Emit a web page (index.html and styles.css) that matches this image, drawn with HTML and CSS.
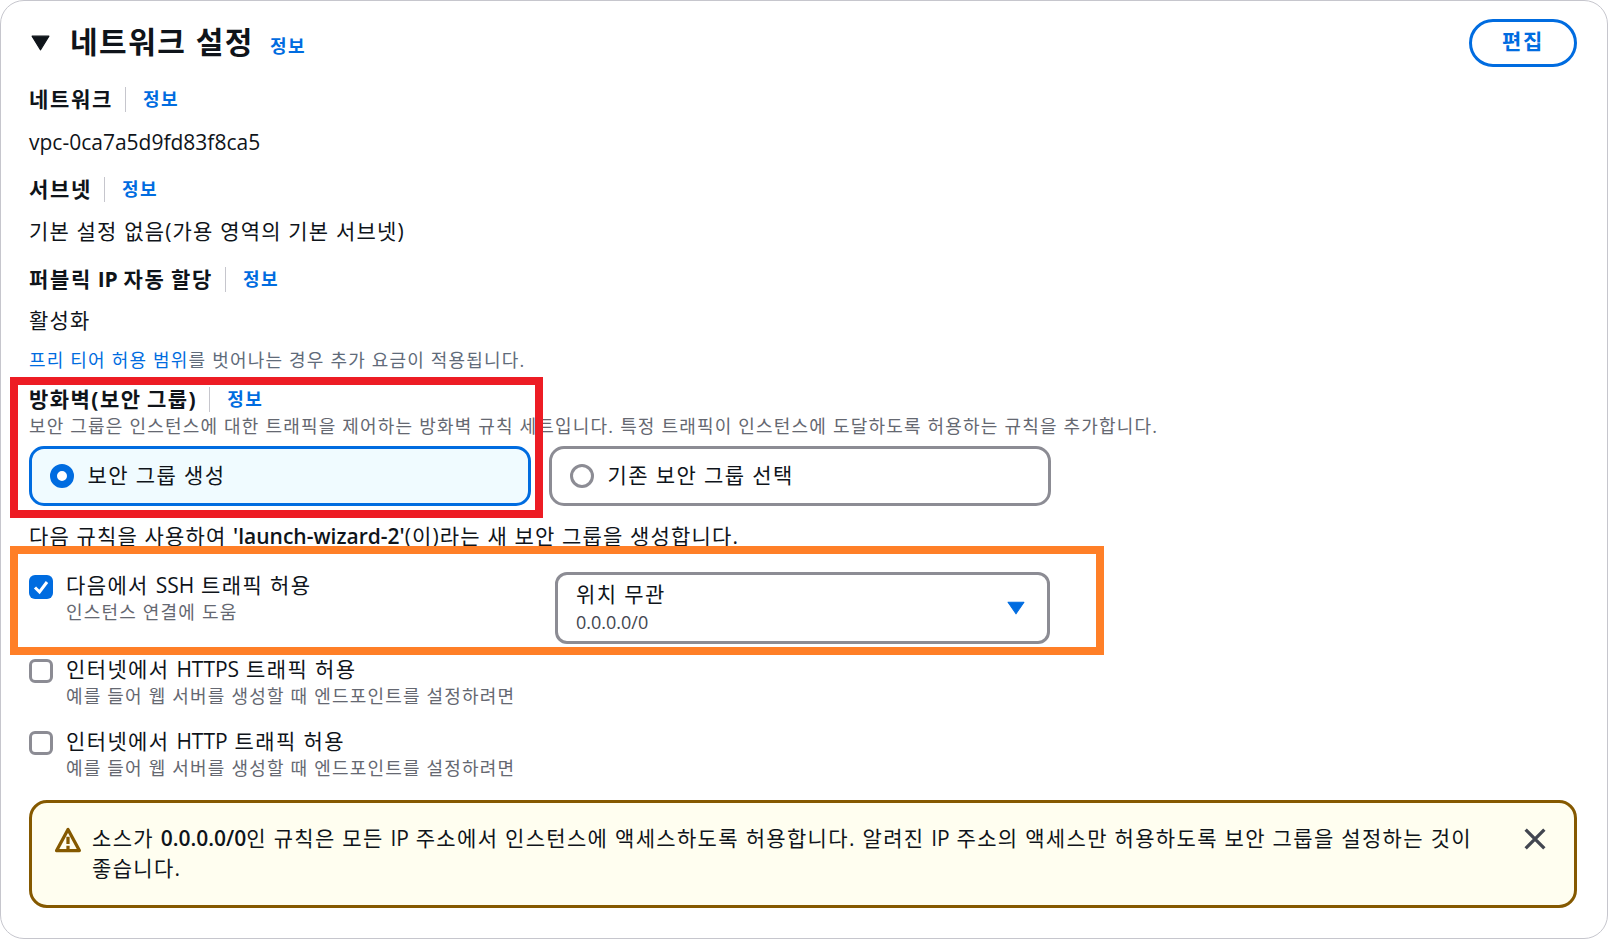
FILE: index.html
```html
<!DOCTYPE html>
<html lang="ko">
<head>
<meta charset="utf-8">
<title>네트워크 설정</title>
<link rel="stylesheet" href="styles.css">
</head>
<body>
<section class="card">
  <header class="head">
    <div class="head-left">
      <svg class="expand" viewBox="0 0 18 15"><path d="M1 1h16L9 14z"/></svg>
      <h2 class="title">네트워크 설정</h2>
      <a class="info info-title">정보</a>
    </div>
    <button class="edit">편집</button>
  </header>

  <div class="label-row first"><span class="label">네트워크</span><a class="info">정보</a></div>
  <p class="value value-first lat">vpc-0ca7a5d9fd83f8ca5</p>
  <div class="label-row"><span class="label">서브넷</span><a class="info">정보</a></div>
  <p class="value">기본 설정 없음(가용 영역의 기본 서브넷)</p>
  <div class="label-row pub"><span class="label">퍼블릭 <span class="lat">IP</span> 자동 할당</span><a class="info">정보</a></div>
  <p class="value value-pub">활성화</p>
  <p class="note"><a class="link">프리 티어 허용 범위</a>를 벗어나는 경우 추가 요금이 적용됩니다.</p>

  <div class="label-row fw"><span class="label label-fw">방화벽(보안 그룹)</span><a class="info">정보</a></div>
  <p class="desc">보안 그룹은 인스턴스에 대한 트래픽을 제어하는 방화벽 규칙 세트입니다. 특정 트래픽이 인스턴스에 도달하도록 허용하는 규칙을 추가합니다.</p>
  <div class="tiles">
    <div class="tile selected"><span class="radio on"></span><span class="tile-text">보안 그룹 생성</span></div>
    <div class="tile"><span class="radio"></span><span class="tile-text">기존 보안 그룹 선택</span></div>
  </div>
  <p class="rule-line">다음 규칙을 사용하여 <b class="lat">'launch-wizard-2'</b>(이)라는 새 보안 그룹을 생성합니다.</p>

  <div class="ssh-row">
    <div class="check-item">
      <span class="box on"><svg viewBox="0 0 24 24"><path d="M6 12.5l4.5 4.5L18 7"/></svg></span>
      <div><div class="check-label">다음에서 <span class="lat">SSH</span> 트래픽 허용</div><div class="check-desc">인스턴스 연결에 도움</div></div>
    </div>
    <div class="select">
      <div><div class="select-main">위치 무관</div><div class="select-sub lat">0.0.0.0/0</div></div>
      <svg class="caret" viewBox="0 0 17 13"><path d="M1 1h15L8.500 12z"/></svg>
    </div>
  </div>

  <div class="check-item https">
    <span class="box"></span>
    <div><div class="check-label">인터넷에서 <span class="lat">HTTPS</span> 트래픽 허용</div><div class="check-desc">예를 들어 웹 서버를 생성할 때 엔드포인트를 설정하려면</div></div>
  </div>
  <div class="check-item http">
    <span class="box"></span>
    <div><div class="check-label">인터넷에서 <span class="lat">HTTP</span> 트래픽 허용</div><div class="check-desc">예를 들어 웹 서버를 생성할 때 엔드포인트를 설정하려면</div></div>
  </div>

  <div class="alert">
    <svg class="alert-icon" viewBox="0 0 16 16"><path d="M8 1.500 1 14.500h14z"/><path d="M8 6v4.500M8 11.500v2"/></svg>
    <p class="alert-text">소스가 <span class="semi lat">0.0.0.0/0</span>인 규칙은 모든 <span class="lat">IP</span> 주소에서 인스턴스에 액세스하도록 허용합니다. 알려진 <span class="lat">IP</span> 주소의 액세스만 허용하도록 보안 그룹을 설정하는 것이<br>좋습니다.</p>
    <svg class="close" viewBox="0 0 20 20"><path d="M1.500 1.500l17 17M18.500 1.500l-17 17"/></svg>
  </div>

  <div class="mark mark-red"></div>
  <div class="mark mark-orange"></div>
</section>
</body>
</html>
```
FILE: styles.css
```css
* { box-sizing: border-box; letter-spacing: .066em; }
html, body { margin: 0; padding: 0; background: #fff; }
body {
  font-family: "Open Sans", "Noto Sans CJK KR", sans-serif;
  font-size: 21px;
  line-height: 30px;
  color: #0f141a;
}
p, h2 { margin: 0; }
.lat { letter-spacing: 0; }
.card {
  position: relative;
  width: 1608px;
  height: 939px;
  border: 1.5px solid #c6c6cd;
  border-radius: 24px;
  padding: 0 30px 0 28px;
}
.head {
  display: flex;
  justify-content: space-between;
  align-items: flex-start;
  padding-top: 18px;
}
.head-left { display: flex; align-items: center; padding-top: 5px; height: 41px; }
.expand { width: 19px; height: 16px; margin: 2px 20px 0 2px; fill: #0f141a; stroke: #0f141a; stroke-width: 1; stroke-linejoin: round; }
.title { font-size: 30px; line-height: 36px; font-weight: 700; letter-spacing: .05em; }
.info { color: #006ce0; font-size: 18px; font-weight: 700; line-height: 24px; letter-spacing: .08em; }
.info-title { margin: 8px 0 0 16px; }
.edit {
  width: 108px;
  height: 48px;
  border: 3px solid #006ce0;
  border-radius: 24px;
  background: #fff;
  color: #006ce0;
  font: 700 21px/30px "Open Sans", "Noto Sans CJK KR", sans-serif;
  letter-spacing: .08em;
  margin-top: 0;
  padding: 0 0 4px;
}
.label-row { display: flex; align-items: center; height: 30px; margin-top: 17px; }
.label-row.first { margin-top: 17px; }
.label-row.pub { margin-top: 18px; }
.label { font-weight: 700; letter-spacing: .08em; word-spacing: -1.5px; padding-right: 12px; border-right: 1.5px solid #c6c6cd; line-height: 25px; }
.label-fw { letter-spacing: .07em; }
.label .lat { letter-spacing: 0; }
.label-row .info { margin-left: 17px; }
.value { margin-top: 12px; letter-spacing: .056em; }
.value.lat { letter-spacing: 0; }
.value-first { margin-top: 13px; }
.value-pub { margin-top: 11px; }
.note { font-size: 18px; line-height: 27px; margin-top: 12px; color: #5f6b7a; }
.link { color: #006ce0; }
.label-row.fw { margin-top: 10px; }
.desc { font-size: 18px; line-height: 27px; color: #656871; margin-top: -1px; }
.tiles { display: grid; grid-template-columns: 502px 502px; gap: 18px; margin-top: 6px; }
.tile {
  height: 60px;
  border: 3px solid #8c8c94;
  border-radius: 15px;
  display: flex;
  align-items: center;
  padding: 0 0 3px 17.5px;
}
.tile.selected { border-color: #006ce0; background: #f0fbff; }
.radio { width: 24px; height: 24px; border-radius: 50%; border: 3px solid #8c8c94; background: #fff; margin-top: 3px; flex: none; }
.radio.on { border: 7px solid #006ce0; }
.tile-text { margin-left: 14px; }
.rule-line { margin-top: 15px; letter-spacing: .055em; }
.rule-line b { font-weight: 600; }
.ssh-row { display: flex; margin-top: 1px; height: 100px; }
.check-item { display: flex; gap: 13px; }
.ssh-row .check-item { width: 526px; padding-top: 18px; }
.box {
  width: 24px;
  height: 24px;
  flex: none;
  margin-top: 5px;
  border: 3px solid #8c8c94;
  border-radius: 6px;
  background: #fff;
}
.box.on { border: 0; background: #006ce0; }
.box svg { display: block; width: 24px; height: 24px; fill: none; stroke: #fff; stroke-width: 3; }
.check-label { line-height: 30px; }
.check-desc { font-size: 18px; line-height: 25px; color: #656871; margin-top: 0; }
.select {
  width: 495px;
  height: 72px;
  margin-top: 20px;
  border: 3px solid #8c8c94;
  border-radius: 12px;
  display: flex;
  justify-content: space-between;
  align-items: center;
  padding: 0 22px 2px 18px;
}
.select-main { line-height: 30px; }
.select-sub { font-size: 18px; line-height: 27px; color: #424650; }
.caret { width: 18px; height: 14px; fill: #006ce0; stroke: #006ce0; stroke-width: 1; stroke-linejoin: round; margin: 2px 0 0 0; }
.https { margin-top: 2px; }
.http { margin-top: 17px; }
.alert {
  position: relative;
  display: flex;
  width: 1548px;
  height: 108px;
  margin-top: 19px;
  border: 3px solid #855900;
  border-radius: 18px;
  background: #fffef0;
  padding: 20px 0 0 23px;
}
.alert-icon { width: 26px; height: 26px; flex: none; margin-top: 4px; fill: none; stroke: #855900; stroke-width: 2; stroke-linejoin: round; }
.alert-text { margin-left: 11px; width: 1420px; letter-spacing: .063em; }
.semi { font-weight: 600; }
.close { position: absolute; right: 28px; top: 25px; width: 22px; height: 22px; fill: none; stroke: #424650; stroke-width: 3; }
.mark { position: absolute; pointer-events: none; border-style: solid; border-width: 8px; }
.mark-red { left: 9px; top: 376px; width: 533px; height: 141px; border-color: #ed1c24; }
.mark-orange { left: 9px; top: 545px; width: 1094px; height: 109px; border-color: #ff7f27; }
```
